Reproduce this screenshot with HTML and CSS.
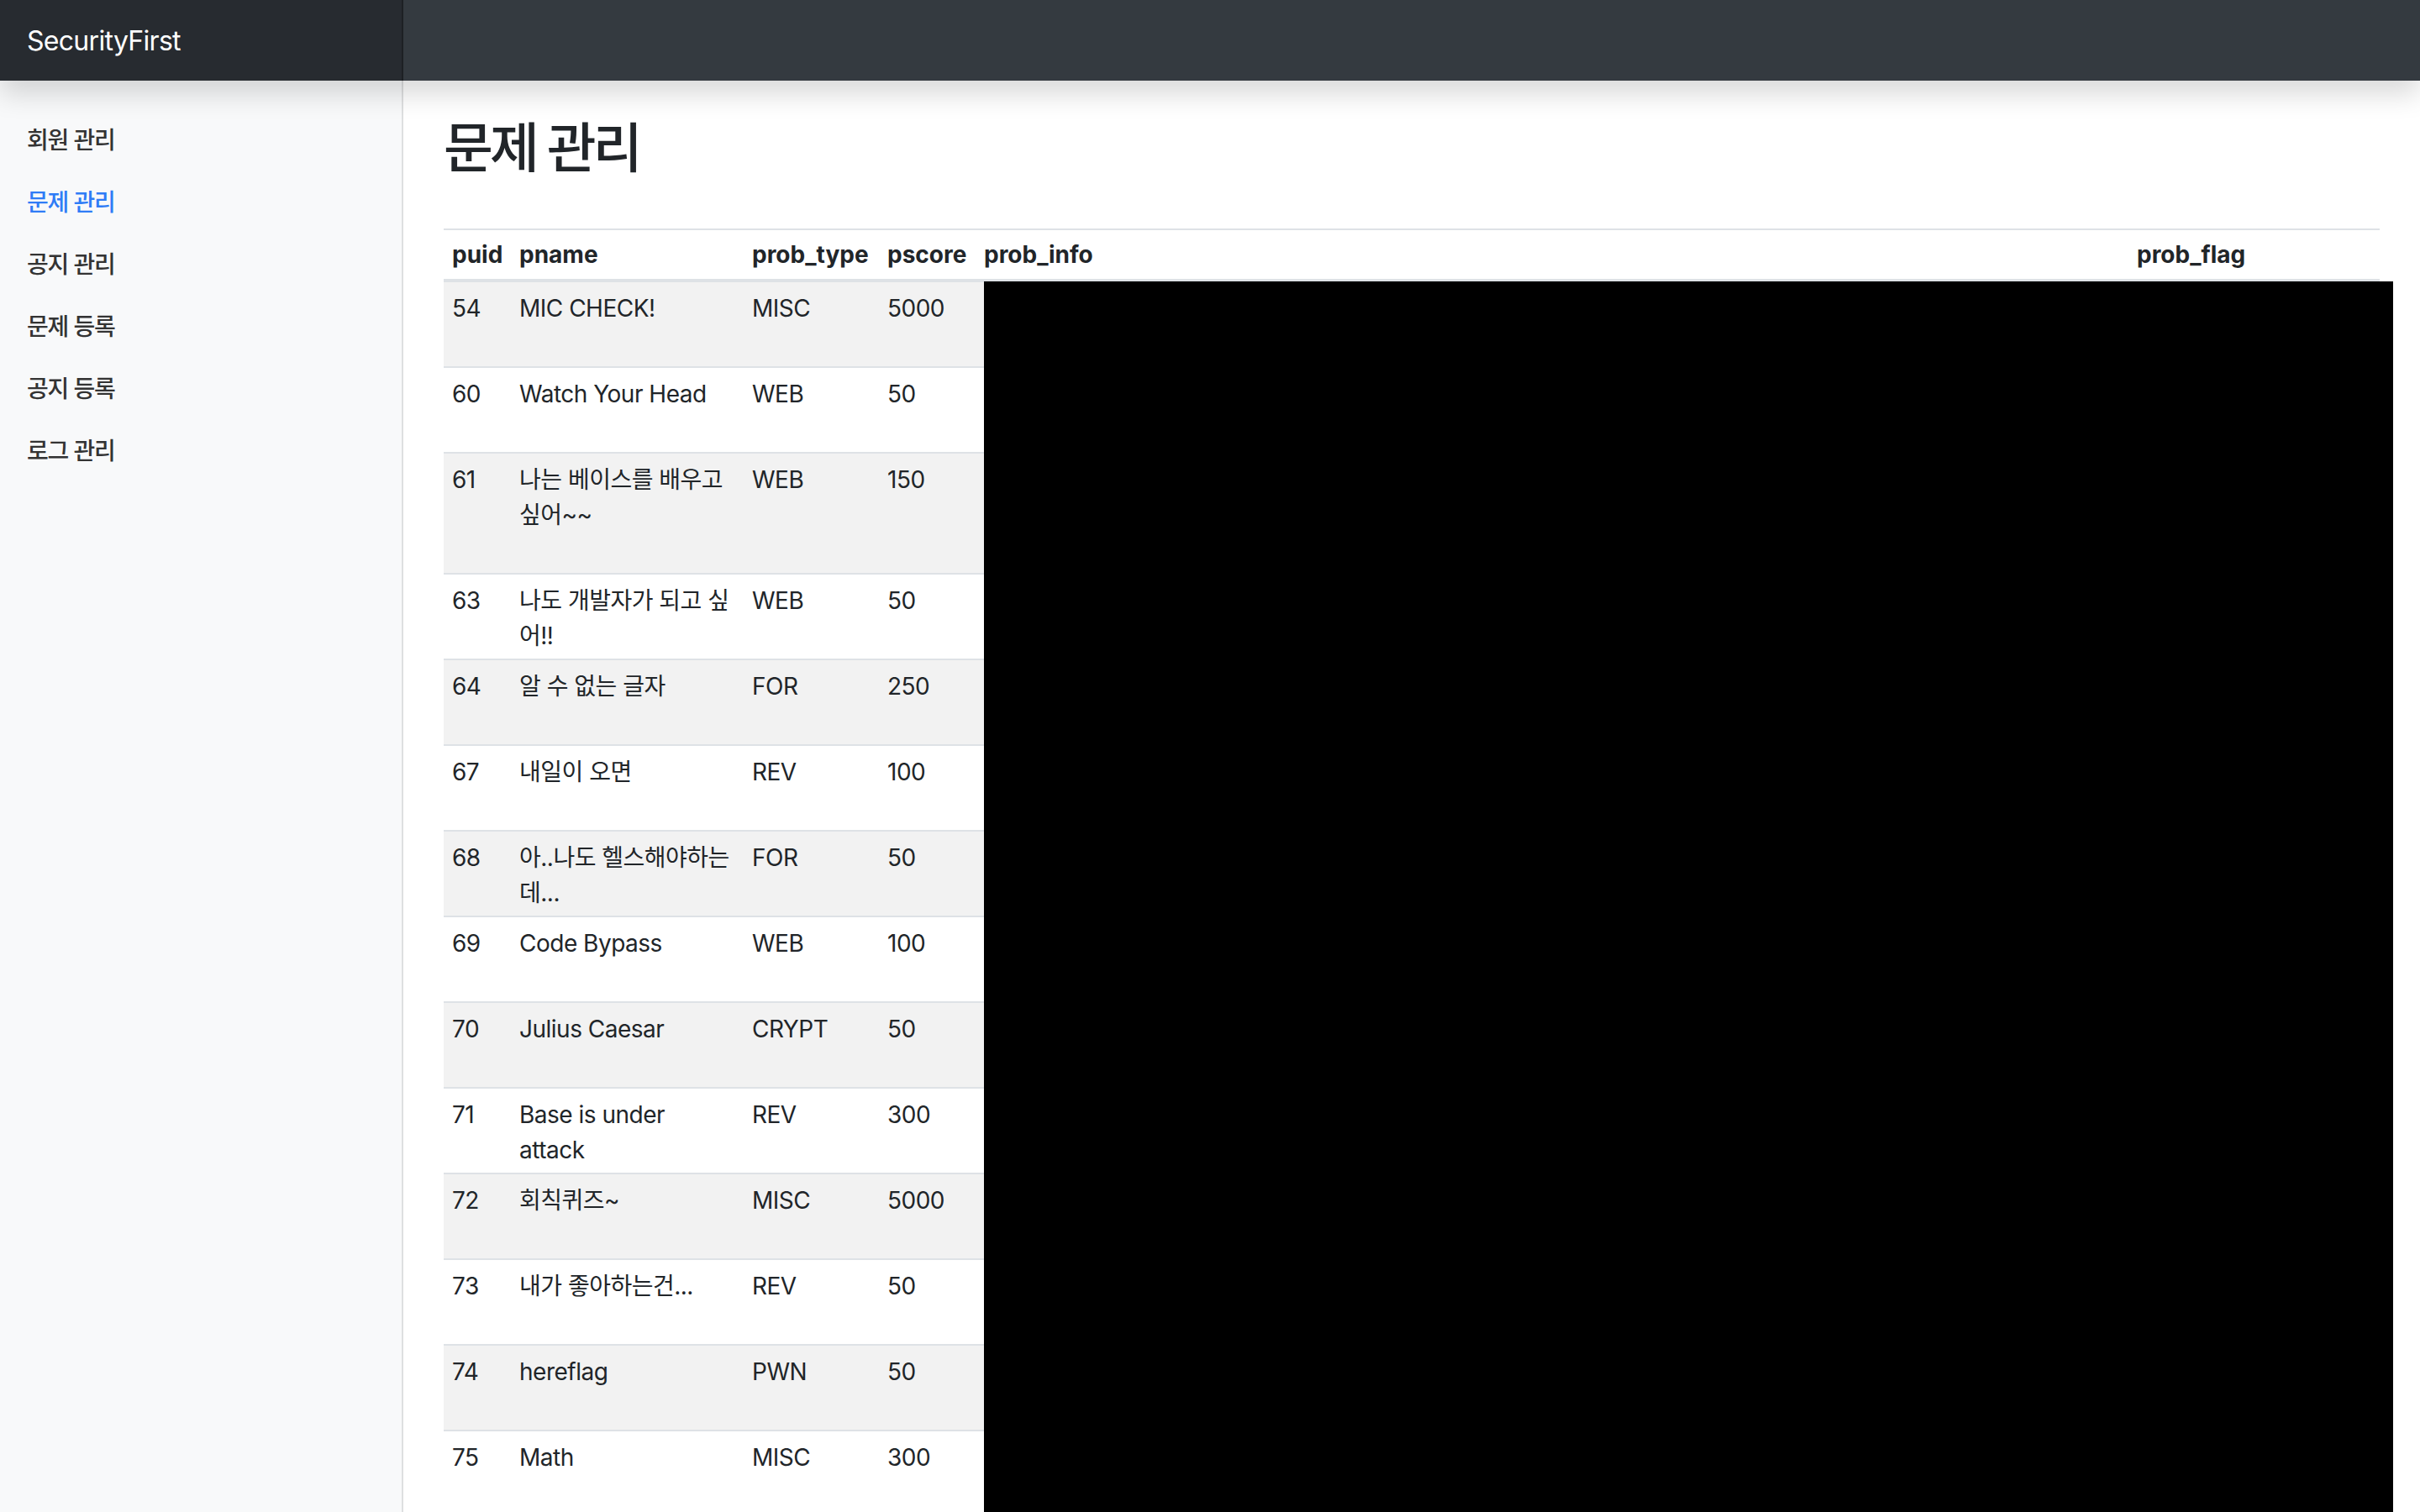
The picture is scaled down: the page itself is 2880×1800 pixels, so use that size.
FILE: index.html
```html
<!DOCTYPE html>
<html lang="ko">
<head>
<meta charset="utf-8">
<title>SecurityFirst - 문제 관리</title>
<link rel="stylesheet" href="styles.css">
</head>
<body>
<header class="topbar">
  <a class="brand" href="#">SecurityFirst</a>
</header>
<div class="layout">
  <aside class="sidebar">
    <ul class="side-nav">
      <li><a class="side-link" href="#">회원 관리</a></li>
      <li><a class="side-link is-active" href="#">문제 관리</a></li>
      <li><a class="side-link" href="#">공지 관리</a></li>
      <li><a class="side-link" href="#">문제 등록</a></li>
      <li><a class="side-link" href="#">공지 등록</a></li>
      <li><a class="side-link" href="#">로그 관리</a></li>
    </ul>
  </aside>
  <main class="main">
    <h2 class="page-title">문제 관리</h2>
    <div class="table-wrap">
      <table class="data-table">
        <colgroup>
          <col class="c-puid"><col class="c-pname"><col class="c-type"><col class="c-score"><col class="c-info"><col class="c-flag">
        </colgroup>
        <thead>
          <tr><th>puid</th><th>pname</th><th>prob_type</th><th>pscore</th><th>prob_info</th><th>prob_flag</th></tr>
        </thead>
        <tbody>
          <tr><td>54</td><td>MIC CHECK!</td><td>MISC</td><td>5000</td><td></td><td></td></tr>
          <tr><td>60</td><td>Watch Your Head</td><td>WEB</td><td>50</td><td></td><td></td></tr>
          <tr class="tall"><td>61</td><td>나는 베이스를 배우고 싶어~~</td><td>WEB</td><td>150</td><td></td><td></td></tr>
          <tr><td>63</td><td>나도 개발자가 되고 싶어!!</td><td>WEB</td><td>50</td><td></td><td></td></tr>
          <tr><td>64</td><td>알 수 없는 글자</td><td>FOR</td><td>250</td><td></td><td></td></tr>
          <tr><td>67</td><td>내일이 오면</td><td>REV</td><td>100</td><td></td><td></td></tr>
          <tr><td>68</td><td>아..나도 헬스해야하는데...</td><td>FOR</td><td>50</td><td></td><td></td></tr>
          <tr><td>69</td><td>Code Bypass</td><td>WEB</td><td>100</td><td></td><td></td></tr>
          <tr><td>70</td><td>Julius Caesar</td><td>CRYPT</td><td>50</td><td></td><td></td></tr>
          <tr><td>71</td><td>Base is under attack</td><td>REV</td><td>300</td><td></td><td></td></tr>
          <tr><td>72</td><td>회칙퀴즈~</td><td>MISC</td><td>5000</td><td></td><td></td></tr>
          <tr><td>73</td><td>내가 좋아하는건...</td><td>REV</td><td>50</td><td></td><td></td></tr>
          <tr><td>74</td><td>hereflag</td><td>PWN</td><td>50</td><td></td><td></td></tr>
          <tr><td>75</td><td>Math</td><td>MISC</td><td>300</td><td></td><td></td></tr>
        </tbody>
      </table>
      <div class="redaction"></div>
    </div>
  </main>
</div>
</body>
</html>
```
FILE: styles.css
```css
* { box-sizing: border-box; }

html, body {
  margin: 0;
  padding: 0;
  background: #ffffff;
}

body {
  font-family: "Inter", "Noto Sans CJK KR", sans-serif;
  font-feature-settings: "palt";
  font-size: 28px;
  line-height: 42px;
  letter-spacing: -0.5px;
  color: #212529;
  height: 1800px;
  overflow: hidden;
}

.topbar {
  position: relative;
  z-index: 2;
  height: 96px;
  display: flex;
  background: #343a40;
  box-shadow: 0 16px 32px rgba(0, 0, 0, 0.15);
}

.brand {
  width: 480px;
  display: flex;
  align-items: center;
  padding: 2px 32px 0 32px;
  font-size: 32px;
  letter-spacing: -0.7px;
  color: #ffffff;
  text-decoration: none;
  background: rgba(0, 0, 0, 0.25);
  box-shadow: inset -2px 0 0 rgba(0, 0, 0, 0.25);
}

.layout {
  display: flex;
  height: 1704px;
  overflow: hidden;
}

.sidebar {
  width: 480px;
  flex: 0 0 480px;
  background: #f8f9fa;
  box-shadow: inset -2px 0 0 rgba(0, 0, 0, 0.1);
  padding-top: 34px;
}

.side-nav {
  list-style: none;
  margin: 0;
  padding: 0;
}

.side-link {
  display: block;
  padding: 16px 32px;
  font-weight: 500;
  letter-spacing: -1.2px;
  color: #333333;
  text-decoration: none;
}

.side-link.is-active {
  color: #2f7cf6;
}

.main {
  flex: 1;
  padding: 41px 48px 0 48px;
}

.page-title {
  margin: 0 0 58px 0;
  font-size: 64px;
  line-height: 77px;
  font-weight: 500;
  letter-spacing: -4px;
}

.table-wrap {
  position: relative;
}

.data-table {
  width: 100%;
  border-collapse: collapse;
  table-layout: fixed;
}

.c-puid { width: 80px; }
.c-pname { width: 277px; }
.c-type { width: 161px; }
.c-score { width: 115px; }
.c-flag { width: 299px; }

.data-table th {
  text-align: left;
  font-weight: 700;
  letter-spacing: 0;
  vertical-align: bottom;
  padding: 8px 10px;
  border-top: 2px solid #dee2e6;
  border-bottom: 4px solid #dee2e6;
  white-space: nowrap;
}

.data-table td {
  vertical-align: top;
  padding: 10px 10px 6px 10px;
  height: 102px;
  border-top: 2px solid #dee2e6;
}

.data-table tbody tr:first-child td {
  border-top: 0;
}

.data-table tbody tr:first-child td {
  height: 103px;
}

.data-table tbody tr:nth-child(odd) {
  background: #f2f2f2;
}

.data-table tr.tall td {
  height: 144px;
}

.redaction {
  position: absolute;
  left: 643px;
  right: -16px;
  top: 63px;
  bottom: -120px;
  background: #000000;
}
```
